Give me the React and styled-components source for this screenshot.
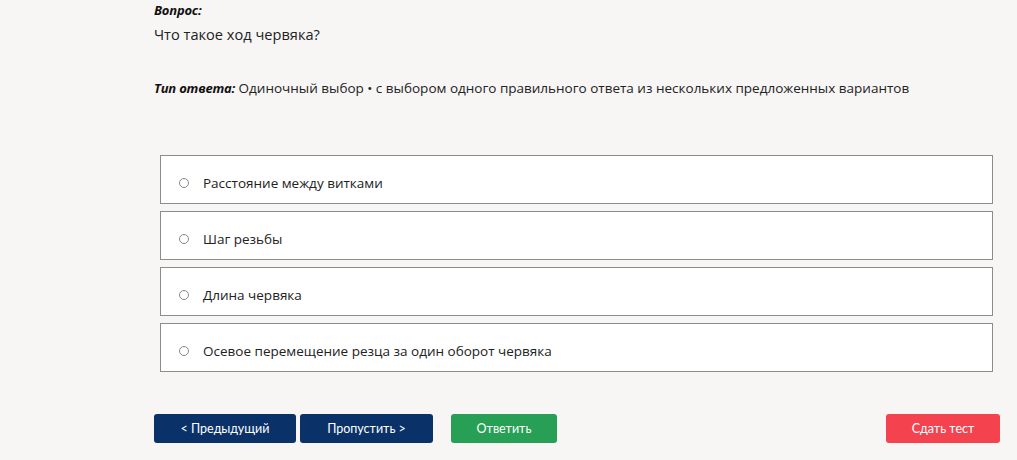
import React, { useState } from 'react'
import styled, { createGlobalStyle } from 'styled-components'

const options = [
	'Расстояние между витками',
	'Шаг резьбы',
	'Длина червяка',
	'Осевое перемещение резца за один оборот червяка',
]

const GlobalStyle = createGlobalStyle`
	html, body {
		margin: 0;
		background: #f7f6f5;
	}
	body {
		font-family: "Open Sans", "Noto Sans", sans-serif;
		color: #222;
	}
`

const App = () => {
	const [picked, setPicked] = useState(null)

	return (
		<>
			<GlobalStyle />
			<SPage>
				<SLabel>Вопрос:</SLabel>
				<SQuestion>Что такое ход червяка?</SQuestion>

				<SType>
					<SLabel as="span">Тип ответа:</SLabel> Одиночный выбор • с выбором одного правильного ответа из нескольких предложенных вариантов
				</SType>

				<SOptions>
					{options.map((text, i) => (
						<SOption key={text} onClick={() => setPicked(i)}>
							<SRadio checked={picked === i} />
							{text}
						</SOption>
					))}
				</SOptions>

				<SActions>
					<SButton variant="navy" width={142}>&lt; Предыдущий</SButton>
					<SButton variant="navy" width={133}>Пропустить &gt;</SButton>
					<SButton variant="green" width={106} style={{ marginLeft: 14 }}>Ответить</SButton>
					<SSpacer />
					<SButton variant="red" width={114}>Сдать тест</SButton>
				</SActions>
			</SPage>
		</>
	)
}

export default App

const SPage = styled.div`
	width: 1017px;
	height: 460px;
	box-sizing: border-box;
	padding: 1px 17px 0 154px;
	display: flex;
	flex-direction: column;
`

const SLabel = styled.div`
	font-size: 13px;
	font-weight: 700;
	font-style: italic;
	line-height: 18px;
	color: #111;
	letter-spacing: -0.2px;
`

const SQuestion = styled.div`
	font-size: 14.6px;
	line-height: 20px;
	margin-top: 5px;
	color: #222;
`

const SType = styled.div`
	font-size: 13.5px;
	line-height: 18px;
	margin-top: 35px;
	color: #222;
`

const SOptions = styled.div`
	margin: 58px 7px 0 6px;
	display: flex;
	flex-direction: column;
	gap: 7px;
`

const SOption = styled.label`
	display: flex;
	align-items: center;
	height: 49px;
	box-sizing: border-box;
	padding: 6px 0 0 18px;
	background: #fff;
	border: 1px solid #8c8c8c;
	font-size: 13.5px;
	color: #222;
	cursor: pointer;
`

const SRadio = styled.span`
	width: 10px;
	height: 10px;
	border-radius: 50%;
	border: 1px solid #8a8a8a;
	box-sizing: border-box;
	margin-right: 14px;
	background: ${(props) => (props.checked ? '#0b3268' : '#fff')};
`

const SActions = styled.div`
	margin-top: 42px;
	display: flex;
	align-items: center;
	gap: 4px;
`

const SSpacer = styled.div`
	flex: 1;
`

const colors = {
	navy: '#0b3268',
	green: '#279f55',
	red: '#f5424f',
}

const SButton = styled.button`
	width: ${(props) => props.width}px;
	height: 29px;
	border: none;
	border-radius: 3px;
	background: ${(props) => colors[props.variant]};
	color: #fff;
	font-family: Lato, "Open Sans", sans-serif;
	font-size: 12.5px;
	padding: 0;
	cursor: pointer;
`
